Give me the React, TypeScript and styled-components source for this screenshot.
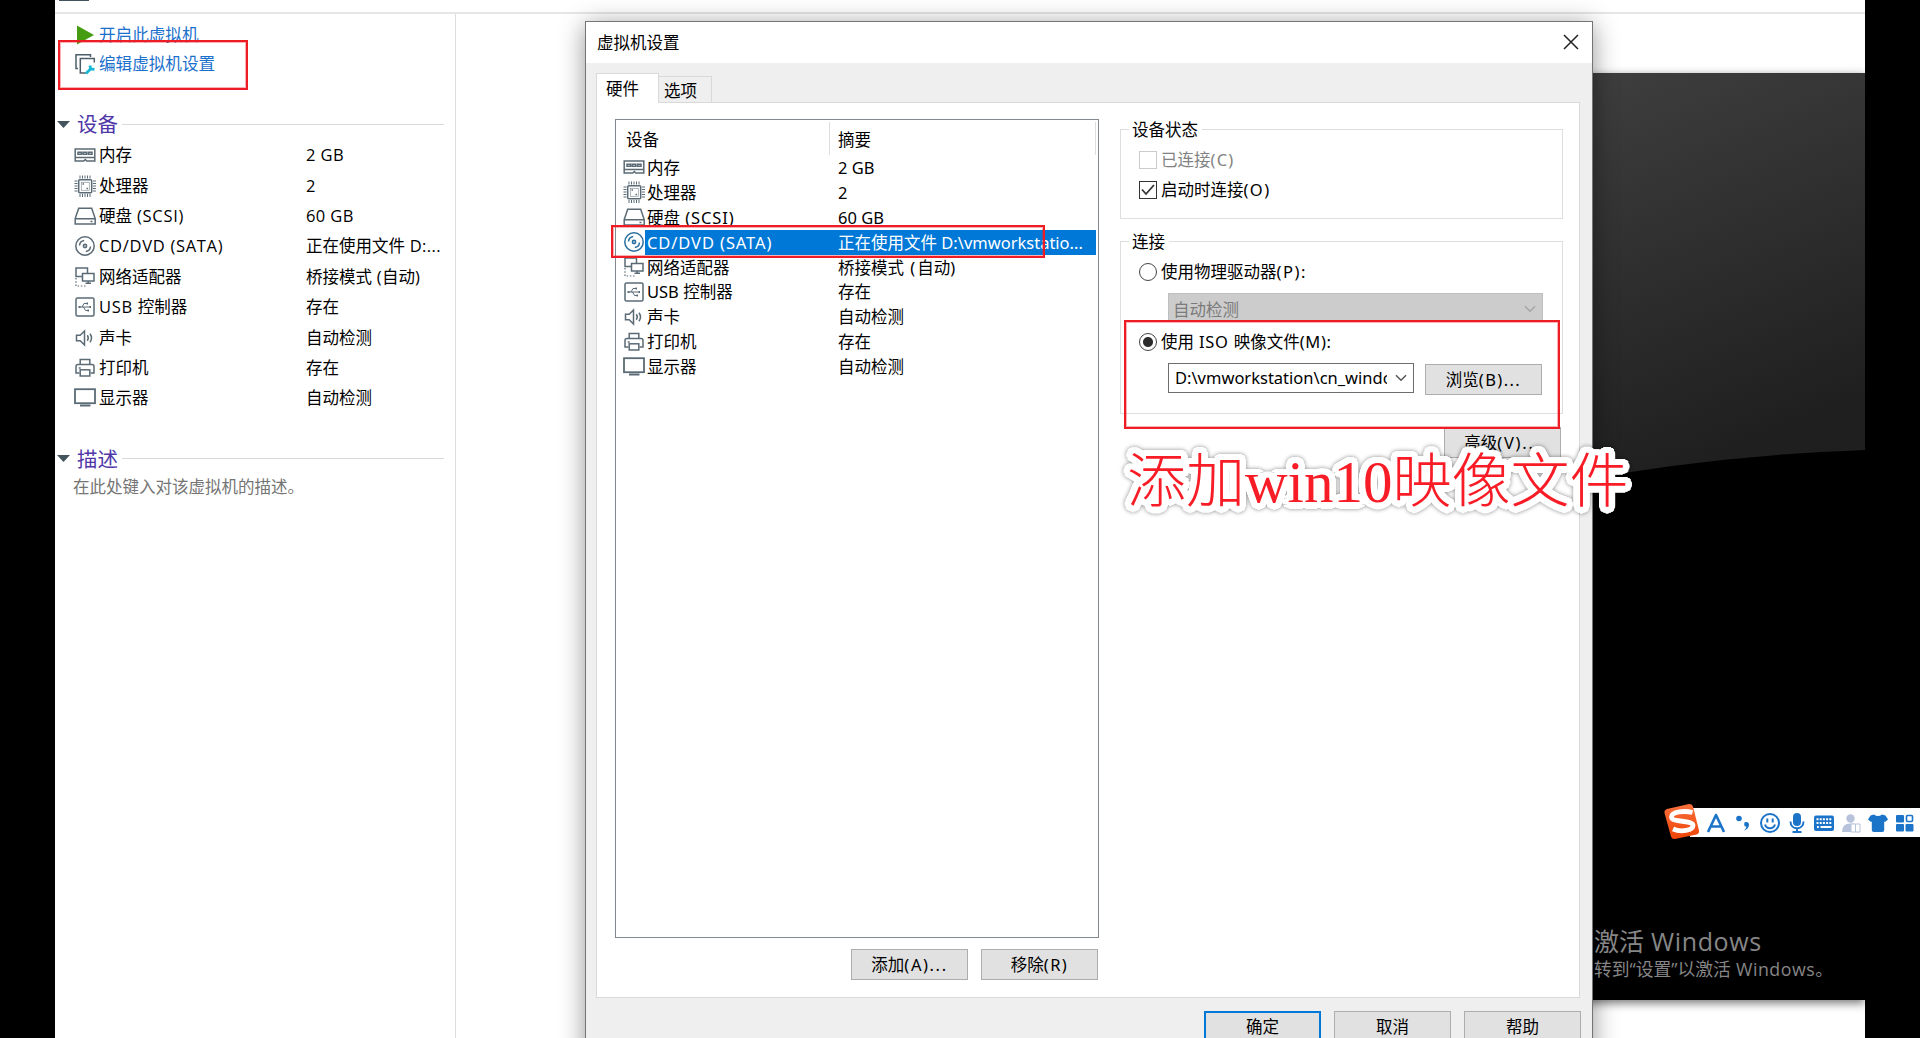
import React from 'react';
import styled, { createGlobalStyle, css } from 'styled-components';

const GlobalStyle = createGlobalStyle`
  * {
    box-sizing: border-box;
  }
  body {
    margin: 0;
    background: #000;
    overflow: hidden;
    font-family: 'Open Sans', 'Noto Sans CJK SC', sans-serif;
    font-size: 16.5px;
    color: #000;
  }
`;

type IconName = 'memory' | 'cpu' | 'disk' | 'cd' | 'network' | 'usb' | 'sound' | 'printer' | 'display';

interface Device {
  icon: IconName;
  name: string;
  value: string;
  shortValue?: string;
}

const DEVICES: Device[] = [
  { icon: 'memory', name: '内存', value: '2 GB' },
  { icon: 'cpu', name: '处理器', value: '2' },
  { icon: 'disk', name: '硬盘 (SCSI)', value: '60 GB' },
  { icon: 'cd', name: 'CD/DVD (SATA)', value: '正在使用文件 D:\\vmworkstatio...', shortValue: '正在使用文件 D:...' },
  { icon: 'network', name: '网络适配器', value: '桥接模式 (自动)' },
  { icon: 'usb', name: 'USB 控制器', value: '存在' },
  { icon: 'sound', name: '声卡', value: '自动检测' },
  { icon: 'printer', name: '打印机', value: '存在' },
  { icon: 'display', name: '显示器', value: '自动检测' },
];

// Latin runs are set a little wider than the Chinese text around them
const LATIN = /([\x20-\x7e]+)/;
const BRACKETS = /(CD\/DVD \(SATA\)| ?[()][\x20-\x7e]*)/;

const Spaced = ({ text, space, match = LATIN }: { text: string; space: number; match?: RegExp }) => (
  <span>
    {text.split(match).map((part, i) => (i % 2 ? <Run key={i} $space={space}>{part}</Run> : part))}
  </span>
);

const SHAPES: Record<IconName, React.ReactNode> = {
  memory: (
    <>
      <path d="M1.2 5h19.6v12h-8l-1.5-1.5L9.8 17H1.2z" />
      <path d="M1.2 13.5h19.6" />
      <path d="M4 8.2h3.5v2H4zM9.2 8.2h3.5v2H9.2zM14.5 8.2H18v2h-3.5z" />
    </>
  ),
  cpu: (
    <>
      <rect x="4.7" y="4.7" width="13" height="13" rx="1" />
      <rect x="7.2" y="7.2" width="8" height="8" strokeWidth="0.5" />
      <path d="M6 .5v3M8.5 .5v3M11 .5v3M13.5 .5v3M16 .5v3M6 19v3M8.5 19v3M11 19v3M13.5 19v3M16 19v3M.5 6h3M.5 8.5h3M.5 11h3M.5 13.5h3M.5 16h3M19 6h3M19 8.5h3M19 11h3M19 13.5h3M19 16h3" strokeWidth="1" />
      <path d="M8.5 9h1.5M12.5 13.5H14" />
    </>
  ),
  disk: (
    <>
      <path d="M1.2 13.5L4.7 3.2h13l3.5 10.3v5.5H1.2z" />
      <path d="M1.2 13.7h20M16.5 16.5h2" />
    </>
  ),
  cd: (
    <>
      <circle cx="11" cy="11" r="9.2" />
      <circle cx="11" cy="11" r="1.6" strokeWidth="1.6" />
      <path d="M5.5 10.5c.2-2.6 2-4.6 4.7-5M16.5 11.5c-.2 2.6-2 4.6-4.7 5" />
    </>
  ),
  network: (
    <>
      <path d="M8 10.5H2V2h11.5v5" />
      <rect x="8.5" y="7.5" width="11.5" height="7.5" />
      <path d="M14.2 15v2M11.5 17.3h5.5" />
      <path d="M2 12v8h11" strokeDasharray="1.5 1.7" strokeWidth="1.2" />
    </>
  ),
  usb: (
    <>
      <rect x="2" y="2" width="18" height="18" rx="1.5" />
      <path d="M5 11h11M8 11l2-3.5h3M9.5 11l2 3.5h3" strokeWidth="1" />
      <path d="M4.5 11h2M15.5 11h1.5M12.5 7.5H14M13.5 14.5H15" strokeWidth="2.2" />
    </>
  ),
  sound: (
    <>
      <path d="M2.5 8.2h3.7L10.5 4v14l-4.3-4.2H2.5z" />
      <path d="M13.3 8.3c1.2 1.7 1.2 3.7 0 5.4M16 6.7c1.9 2.7 1.9 5.9 0 8.6" />
    </>
  ),
  printer: (
    <>
      <path d="M6.2 7.5v-5h9.6v5" />
      <path d="M5.5 16H2V9.5q0-2 2-2h14q2 0 2 2V16h-3.5" />
      <rect x="6.2" y="12.8" width="9.6" height="6.2" />
      <path d="M4.7 11h2" />
    </>
  ),
  display: (
    <>
      <rect x="1" y="2.2" width="20" height="14" strokeWidth="1.8" />
      <path d="M6 18.5h10.5" strokeWidth="2" />
    </>
  ),
};

const DeviceIcon = ({ name, selected }: { name: IconName; selected?: boolean }) => (
  <svg width="22" height="22" viewBox="0 0 22 22" fill="none" stroke={selected ? '#2a6f9f' : '#5b6b76'} strokeWidth="1.5">
    {SHAPES[name]}
  </svg>
);

const Chevron = ({ color }: { color: string }) => (
  <svg width="12" height="8" viewBox="0 0 12 8" fill="none" stroke={color} strokeWidth="1.5">
    <path d="M1 1.2l5 5 5-5" />
  </svg>
);

const SectionTitle = ({ children }: { children: React.ReactNode }) => (
  <Section>
    <svg width="13" height="7" viewBox="0 0 13 7">
      <path d="M0 0h13L6.5 7z" fill="#44545f" />
    </svg>
    <SectionText>{children}</SectionText>
    <SectionLine />
  </Section>
);

function Sidebar() {
  return (
    <SidePanel>
      <Command>
        <svg width="22" height="22" viewBox="0 0 22 22">
          <path d="M3 1.5L20 11 3 20.5z" fill="#469c10" />
        </svg>
        <CommandText>开启此虚拟机</CommandText>
      </Command>
      <Command>
        <svg width="22" height="22" viewBox="0 0 22 22" fill="none" stroke="#4b5d68" strokeWidth="1.5">
          <path d="M4 15.5H2V1.8h14.5V4" />
          <path d="M12 20H6.3V5.5h14v4" />
          <path d="M12 20.5l5.5-5.5M16 12.5l.5 3.5 4 .3" stroke="#14b8d4" strokeWidth="2.8" />
        </svg>
        <CommandText>编辑虚拟机设置</CommandText>
      </Command>
      <SectionTitle>设备</SectionTitle>
      <Summary>
        {DEVICES.map(d => (
          <SummaryRow key={d.icon}>
            <DeviceIcon name={d.icon} />
            <SummaryName>
              <Spaced text={d.name} space={0.7} />
            </SummaryName>
            <Spaced text={d.shortValue || d.value} space={0.4} />
          </SummaryRow>
        ))}
      </Summary>
      <SectionTitle>描述</SectionTitle>
      <Description>在此处键入对该虚拟机的描述。</Description>
    </SidePanel>
  );
}

function DeviceList() {
  return (
    <ListColumn>
      <ListBox>
        <ListHeader>
          <HeaderCell $width={214}>设备</HeaderCell>
          <HeaderCell $width={266}>摘要</HeaderCell>
        </ListHeader>
        {DEVICES.map(d => {
          const selected = d.icon === 'cd';
          return (
            <ListRow key={d.icon}>
              <DeviceIcon name={d.icon} selected={selected} />
              <RowFill $selected={selected}>
                <RowName>
                  <Spaced text={d.name} space={0.9} match={BRACKETS} />
                </RowName>
                <Spaced text={d.value} space={2} match={BRACKETS} />
              </RowFill>
            </ListRow>
          );
        })}
      </ListBox>
      <ListButtons>
        <Button>
          <Spaced text="添加(A)..." space={1.6} />
        </Button>
        <Button>
          <Spaced text="移除(R)" space={1.4} />
        </Button>
      </ListButtons>
    </ListColumn>
  );
}

function DeviceOptions() {
  return (
    <OptionsColumn>
      <Group $height={90}>
        <GroupLabel>设备状态</GroupLabel>
        <Options>
          <Option $disabled>
            <Checkbox $disabled />
            <Spaced text="已连接(C)" space={1.2} />
          </Option>
          <Option>
            <Checkbox>
              <svg width="14" height="12" viewBox="0 0 14 12" fill="none" stroke="#333" strokeWidth="1.8">
                <path d="M1 5.5l4 4.5 8-9" />
              </svg>
            </Checkbox>
            <Spaced text="启动时连接(O)" space={1.4} />
          </Option>
        </Options>
      </Group>
      <Group $height={173}>
        <GroupLabel>连接</GroupLabel>
        <Options>
          <Option>
            <Radio />
            <Spaced text="使用物理驱动器(P):" space={1.5} />
          </Option>
          <DisabledCombo>
            <span>自动检测</span>
            <Chevron color="#a5a5a5" />
          </DisabledCombo>
          <Option>
            <Radio $checked />
            <Spaced text="使用 ISO 映像文件(M):" space={0.7} />
          </Option>
          <FileRow>
            <Combo>
              <ComboText>D:\vmworkstation\cn_windo</ComboText>
              <Chevron color="#555" />
            </Combo>
            <BrowseButton>
              <Spaced text="浏览(B)..." space={1.4} />
            </BrowseButton>
          </FileRow>
        </Options>
      </Group>
      <AdvancedRow>
        <Button>
          <Spaced text="高级(V)..." space={1.7} />
        </Button>
      </AdvancedRow>
    </OptionsColumn>
  );
}

function SettingsDialog() {
  return (
    <Dialog>
      <TitleBar>
        <span>虚拟机设置</span>
        <svg width="16" height="16" viewBox="0 0 16 16" stroke="#222" strokeWidth="1.5">
          <path d="M1 1l14 14M15 1L1 15" />
        </svg>
      </TitleBar>
      <Tabs>
        <ActiveTab>硬件</ActiveTab>
        <Tab>选项</Tab>
      </Tabs>
      <TabPanel>
        <DeviceList />
        <DeviceOptions />
      </TabPanel>
      <DialogButtons>
        <Button $primary>确定</Button>
        <Button>取消</Button>
        <Button>帮助</Button>
      </DialogButtons>
    </Dialog>
  );
}

function InputBar() {
  return (
    <ImeBar>
      <ImeLogo width="38" height="38" viewBox="0 0 38 38">
        <defs>
          <linearGradient id="ime" x1="0" y1="0" x2="0" y2="1">
            <stop offset="0" stopColor="#f9703c" />
            <stop offset="1" stopColor="#ee4407" />
          </linearGradient>
        </defs>
        <path d="M4 6L26 1q3-.5 4 2.5l6 24q.5 3-2.5 4L12 36q-3 .5-4-2.5L1.5 10Q1 7 4 6z" fill="url(#ime)" />
        <path d="M29.5 9.5C22 7.5 8.5 8.5 8.5 14c0 6 21.5 2.5 21.5 8.5 0 5-12 7-20 3.5" fill="none" stroke="#fff" strokeWidth="4.8" />
      </ImeLogo>
      <svg width="20" height="20" viewBox="0 0 20 20" fill="none" stroke="#1c74c9" strokeWidth="2.6" strokeLinejoin="round">
        <path d="M2 19L10 2l8 17M5.5 13.5h9" />
      </svg>
      <svg width="20" height="20" viewBox="0 0 20 20" fill="#1c74c9">
        <circle cx="6" cy="5.5" r="2.8" />
        <path d="M11.5 9.2q4.5-.8 4.5 2.6 0 4-5 5.7 2.4-2.2 2.4-3.8-2.2 0-2.2-2z" />
      </svg>
      <svg width="20" height="20" viewBox="0 0 20 20" fill="none" stroke="#1c74c9" strokeWidth="2">
        <circle cx="10" cy="10" r="9" />
        <path d="M7.3 5.5v4M12.7 5.5v4M5 11.5c1.5 5 8.5 5 10 0" />
      </svg>
      <svg width="20" height="20" viewBox="0 0 20 20" fill="none" stroke="#1c74c9" strokeWidth="2">
        <rect x="6" y="0" width="8" height="13" rx="4" fill="#1c74c9" stroke="none" />
        <path d="M3.5 8.5c0 9 13 9 13 0M10 15v4M5.5 19h9" />
      </svg>
      <svg width="20" height="20" viewBox="0 0 20 20">
        <rect y="2.5" width="20" height="15.5" rx="2" fill="#1c74c9" />
        <path d="M2.5 6.2h15M2.5 10h15" stroke="#fff" strokeWidth="2" strokeDasharray="2 1.2" />
        <path d="M3 14h1.8M6.5 14h11" stroke="#fff" strokeWidth="2" />
      </svg>
      <svg width="20" height="20" viewBox="0 0 20 20" fill="#b7c3da">
        <circle cx="9.5" cy="5.5" r="4.2" />
        <path d="M1 19q0-8.5 8-8.5h4V19z" />
        <path d="M10 11h4.5v8H10zM14.5 11H19v8h-4.5z" fill="#fff" stroke="#b7c3da" />
      </svg>
      <svg width="20" height="20" viewBox="0 0 20 20" fill="#1c74c9">
        <path d="M6 1.5q4 3 8 0l3.5 1L20 6.5 17 9l-.8-.5V17q0 2-2 2H5.8q-2 0-2-2V8.5L3 9 0 6.5l2.5-4z" />
      </svg>
      <svg width="20" height="20" viewBox="0 0 20 20" fill="#1c74c9">
        <rect x="1" y="2" width="8" height="7.5" rx="1" />
        <rect x="1" y="11" width="8" height="7.5" rx="1" />
        <rect x="10.5" y="11" width="8" height="7.5" rx="1" />
        <rect x="11.5" y="2.5" width="6" height="6" rx="1" fill="#fff" stroke="#1c74c9" strokeWidth="1.6" />
      </svg>
    </ImeBar>
  );
}

function App() {
  return (
    <Desktop>
      <GlobalStyle />
      <Workspace>
        <TopStrip>
          <TabStub />
        </TopStrip>
        <Content>
          <Sidebar />
          <Preview>
            <Screen>
              <svg width="300" height="927" viewBox="0 0 300 927" preserveAspectRatio="none">
                <defs>
                  <linearGradient id="glare" x1="0" y1="0" x2="0.3" y2="1">
                    <stop offset="0" stopColor="#3f3f3f" />
                    <stop offset="1" stopColor="#1f1f1f" />
                  </linearGradient>
                </defs>
                <rect width="300" height="927" fill="#000" />
                <path d="M0 0h300v377Q150 382 0 410z" fill="url(#glare)" />
              </svg>
            </Screen>
          </Preview>
        </Content>
      </Workspace>
      <SettingsDialog />
      <Watermark>
        <WatermarkTitle>
          <Spaced text="激活 Windows" space={0.6} />
        </WatermarkTitle>
        <WatermarkText>
          <Spaced text="转到“设置”以激活 Windows。" space={0.5} />
        </WatermarkText>
      </Watermark>
      <Marker $x={58} $y={40} $w={190} $h={50} />
      <Marker $x={611} $y={225} $w={434} $h={33} />
      <Marker $x={1124} $y={320} $w={436} $h={109} />
      <Caption>添加win10映像文件</Caption>
      <InputBar />
    </Desktop>
  );
}

export default App;

// a round white outline, drawn as a ring of hard shadows
const halo = (radius: number) =>
  Array.from({ length: 32 }, (_, i) => {
    const a = (i / 32) * Math.PI * 2;
    return `${(Math.cos(a) * radius).toFixed(2)}px ${(Math.sin(a) * radius).toFixed(2)}px 0 #fff`;
  }).join(', ');

const Run = styled.span<{ $space: number }>`
  letter-spacing: ${p => p.$space}px;
`;

const Desktop = styled.div`
  position: relative;
  width: 1920px;
  height: 1038px;
  padding: 0 55px;
  overflow: hidden;
  background: #000;
`;

const Workspace = styled.div`
  display: flex;
  flex-direction: column;
  height: 100%;
  background: #fff;
`;

const TopStrip = styled.div`
  height: 14px;
  padding-left: 4px;
  border-bottom: 2px solid #e6e6e6;
`;

const TabStub = styled.div`
  width: 30px;
  height: 1px;
  background: #44545f;
`;

const Content = styled.div`
  display: flex;
  flex: 1;
`;

const SidePanel = styled.div`
  width: 401px;
  padding: 6px 11px 0 2px;
  border-right: 1px solid #dcdcdc;
`;

const Command = styled.div`
  display: flex;
  align-items: center;
  gap: 3px;
  height: 29px;
  padding-left: 17px;
`;

const CommandText = styled.span`
  color: #1b70cc;
  font-size: 16.6px;
  line-height: 24px;
`;

const Section = styled.div`
  display: flex;
  align-items: center;
  height: 30px;
  margin-top: 31px;
`;

const SectionText = styled.span`
  margin: 0 4px 0 7px;
  color: #4f37a8;
  font-size: 20.5px;
  line-height: 30px;
`;

const SectionLine = styled.div`
  flex: 1;
  height: 1px;
  background: #d9d9d9;
`;

const Summary = styled.div`
  padding: 1px 0 0 17px;
  margin-bottom: -1px;
`;

const SummaryRow = styled.div`
  display: flex;
  align-items: center;
  height: 30.4px;
  line-height: 24px;
  white-space: nowrap;
`;

const SummaryName = styled.span`
  width: 207px;
  margin-left: 3px;
`;

const Description = styled.div`
  padding-left: 16px;
  color: #757575;
  line-height: 26px;
`;

const Preview = styled.div`
  flex: 1;
  padding-top: 59px;
`;

const Screen = styled.div`
  display: flex;
  justify-content: flex-end;
  height: 927px;
  margin-left: 700px;
  background: #000;
  box-shadow: 0 3px 9px rgba(0, 0, 0, 0.55);
  clip-path: inset(-14px 0 -14px 0);
`;

const Dialog = styled.div`
  position: absolute;
  left: 585px;
  top: 21px;
  width: 1008px;
  height: 1040px;
  border: 1px solid #747474;
  background: #efefef;
  box-shadow: 0 4px 24px rgba(0, 0, 0, 0.42);
  font-family: 'Noto Sans', 'Noto Sans CJK SC', sans-serif;
`;

const TitleBar = styled.div`
  display: flex;
  align-items: center;
  justify-content: space-between;
  height: 41px;
  padding: 0 13px 2px 11px;
  background: #fff;
`;

const Tabs = styled.div`
  display: flex;
  align-items: flex-end;
  height: 39px;
  padding-left: 10px;
`;

const Tab = styled.div`
  width: 53px;
  height: 26px;
  padding-left: 5px;
  border: 1px solid #d9d9d9;
  border-bottom: 0;
  border-left: 0;
  line-height: 28px;
`;

const ActiveTab = styled(Tab)`
  position: relative;
  width: 63px;
  height: 30px;
  margin-bottom: -1px;
  padding-left: 9px;
  border-left: 1px solid #d9d9d9;
  background: #fff;
  line-height: 30px;
`;

const TabPanel = styled.div`
  display: flex;
  width: 984px;
  height: 896px;
  margin-left: 10px;
  padding: 16px 15px 0 18px;
  border: 1px solid #d9d9d9;
  background: #fff;
`;

const ListColumn = styled.div`
  width: 484px;
`;

const ListBox = styled.div`
  height: 819px;
  border: 1px solid #828790;
  background: #fff;
`;

const ListHeader = styled.div`
  display: flex;
  height: 35px;
  padding-top: 2px;
`;

const HeaderCell = styled.div<{ $width: number }>`
  width: ${p => p.$width}px;
  height: 33px;
  padding-left: ${p => (p.$width > 240 ? 8 : 10)}px;
  border-right: 1px solid #dedede;
  line-height: 35px;
`;

const ListRow = styled.div`
  display: flex;
  align-items: center;
  height: 24.9px;
  padding: 0 2px 0 7px;
  white-space: nowrap;
`;

const RowFill = styled.div<{ $selected: boolean }>`
  display: flex;
  flex: 1;
  height: 100%;
  padding-left: 2px;
  line-height: 26px;
  ${p =>
    p.$selected &&
    css`
      background: #0078d7;
      color: #fff;
    `}
`;

const RowName = styled.span`
  width: 191px;
`;

const Button = styled.button<{ $primary?: boolean }>`
  width: 117px;
  height: 31px;
  padding: 0;
  border: ${p => (p.$primary ? '2px solid #0078d7' : '1px solid #adadad')};
  background: #e1e1e1;
  color: #000;
  font: inherit;
  line-height: 28px;
`;

const BrowseButton = styled(Button)`
  margin-top: 1px;
`;

const ListButtons = styled.div`
  display: flex;
  justify-content: flex-end;
  gap: 13px;
  margin-top: 11px;
  padding-right: 1px;
`;

const OptionsColumn = styled.div`
  width: 443px;
  margin: 10px 0 0 21px;
`;

const Group = styled.div<{ $height: number }>`
  height: ${p => p.$height}px;
  margin-bottom: 22px;
  border: 1px solid #dedede;
`;

const GroupLabel = styled.div`
  width: fit-content;
  height: 24px;
  margin: -12px 0 0 8px;
  padding: 0 4px 0 3px;
  background: #fff;
  line-height: 24px;
`;

const Options = styled.div`
  padding-top: 3px;
`;

const Option = styled.div<{ $disabled?: boolean }>`
  display: flex;
  align-items: center;
  gap: 4px;
  height: 30px;
  padding-left: 18px;
  line-height: 24px;
  color: ${p => (p.$disabled ? '#838383' : 'inherit')};
`;

const Checkbox = styled.span<{ $disabled?: boolean }>`
  display: flex;
  align-items: center;
  justify-content: center;
  width: 18px;
  height: 18px;
  border: 1px solid ${p => (p.$disabled ? '#cccccc' : '#333')};
`;

const Radio = styled.span<{ $checked?: boolean }>`
  width: 18px;
  height: 18px;
  border: 1px solid #444;
  border-radius: 50%;
  background: ${p => (p.$checked ? 'radial-gradient(circle, #2b2b2b 4.5px, #fff 5.5px)' : '#fff')};
`;

const DisabledCombo = styled.div`
  display: flex;
  align-items: center;
  justify-content: space-between;
  width: 375px;
  height: 29px;
  margin: 6px 0 5px 47px;
  padding: 3px 6px 0 4px;
  border: 1px solid #bfbfbf;
  background: #ccc;
  color: #7b7b7b;
`;

const FileRow = styled.div`
  display: flex;
  align-items: flex-start;
  gap: 11px;
  margin: 6px 0 0 47px;
`;

const Combo = styled.div`
  display: flex;
  align-items: center;
  justify-content: space-between;
  width: 246px;
  height: 30px;
  padding: 0 6px 0 6px;
  border: 1px solid #6e6e6e;
  background: #fff;
`;

const ComboText = styled.span`
  width: 212px;
  overflow: hidden;
  white-space: nowrap;
  line-height: 26px;
`;

const AdvancedRow = styled.div`
  display: flex;
  justify-content: flex-end;
  margin: -9px 2px 0 0;
`;

const DialogButtons = styled.div`
  display: flex;
  justify-content: flex-end;
  gap: 13px;
  margin-top: 13px;
  padding-right: 11px;
`;

const Watermark = styled.div`
  position: absolute;
  left: 1594px;
  top: 924px;
  color: #868686;
  white-space: nowrap;
`;

const WatermarkTitle = styled.div`
  font-size: 25px;
  line-height: 34px;
`;

const WatermarkText = styled.div`
  font-size: 17.8px;
  line-height: 22px;
`;

const Marker = styled.div<{ $x: number; $y: number; $w: number; $h: number }>`
  position: absolute;
  left: ${p => p.$x}px;
  top: ${p => p.$y}px;
  width: ${p => p.$w}px;
  height: ${p => p.$h}px;
  border: 2px solid #ee1c25;
  box-shadow: inset 0 0 0 1px rgba(238, 28, 37, 0.35);
`;

const Caption = styled.div`
  position: absolute;
  left: 1127px;
  top: 444px;
  color: #f81c26;
  font-family: 'Liberation Serif', 'Noto Sans CJK SC', serif;
  font-size: 59px;
  font-weight: 300;
  line-height: 76px;
  white-space: nowrap;
  text-shadow: ${halo(6.5)}, ${halo(3.5)};
  filter: drop-shadow(0 0 2px rgba(0, 0, 0, 0.45));
`;

const ImeBar = styled.div`
  position: absolute;
  left: 1690px;
  top: 808px;
  display: flex;
  align-items: center;
  gap: 7px;
  width: 230px;
  height: 29px;
  padding-left: 16px;
  background: #fff;
`;

const ImeLogo = styled.svg`
  position: absolute;
  left: -27px;
  top: -5px;
`;
